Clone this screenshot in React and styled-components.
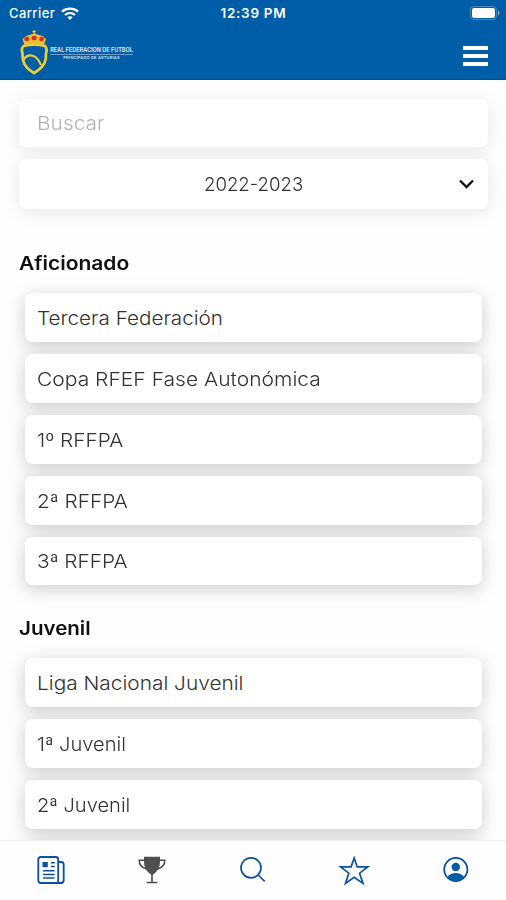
import React from 'react';
import styled, {createGlobalStyle} from 'styled-components';

const BLUE = '#005da8';

const GlobalStyle = createGlobalStyle`
  * {
    box-sizing: border-box;
  }
  body {
    margin: 0;
    background: #fefefe;
    font-family: Inter, "Open Sans", sans-serif;
  }
`;

const Screen = styled.div`
  height: 900px;
  display: flex;
  flex-direction: column;
  overflow: hidden;
`;

const Header = styled.header`
  flex: none;
  height: 80px;
  background: ${BLUE};
  border-bottom: 1px solid #0b469b;
  color: white;
`;

const StatusBar = styled.div`
  height: 26px;
  padding: 0 6px 0 9px;
  display: grid;
  grid-template-columns: 1fr auto 1fr;
  align-items: center;
  font-size: 13px;
  line-height: 26px;
`;

const Carrier = styled.div`
  display: flex;
  align-items: center;
  gap: 6px;
  font-weight: 500;
  letter-spacing: 0.42px;
`;

const Clock = styled.div`
  font-weight: 600;
  font-size: 13.5px;
  letter-spacing: 0.7px;
  margin-right: 2px;
`;

const Battery = styled.svg`
  justify-self: end;
`;

const TitleBar = styled.div`
  height: 53px;
  padding: 3px 18px 0 20px;
  display: flex;
  justify-content: space-between;
`;

const Brand = styled.div`
  display: flex;
`;

const BrandText = styled.div`
  padding-top: 18px;
  width: 83px;
  margin-left: 1px;
  text-align: center;
  white-space: nowrap;
  color: #d5e2ef;
`;

const BrandName = styled.div`
  font-size: 5.5px;
  line-height: 7px;
  font-weight: 700;
  border-bottom: 1px solid #6f9dc8;
`;

const BrandRegion = styled.div`
  font-size: 4px;
  line-height: 5px;
  font-weight: 600;
  letter-spacing: 0.2px;
`;

const MenuButton = styled.div`
  margin-top: 17px;
  width: 25px;
  height: 20px;
  display: flex;
  flex-direction: column;
  justify-content: space-between;
  span {
    height: 4px;
    background: white;
  }
`;

const Content = styled.main`
  flex: 1;
  min-height: 0;
  overflow: hidden;
  padding: 19px 18px 0 19px;
`;

// the shadow is cast by the whole stack, so cards never shade each other
const Filters = styled.div`
  display: flex;
  flex-direction: column;
  gap: 12px;
  filter: drop-shadow(0 3px 9px rgba(0, 0, 0, 0.09));
`;

const Field = styled.div`
  height: ${({select}) => (select ? 50 : 48)}px;
  padding: 0 12px 0 18px;
  display: grid;
  grid-template-columns: ${({select}) => (select ? '14px 1fr 18px' : '1fr')};
  align-items: center;
  border-radius: 8px;
  background: white;
  font-size: 19px;
  font-weight: 300;
  color: ${({muted}) => (muted ? '#b4b4b4' : '#333')};
  text-align: ${({select}) => (select ? 'center' : 'left')};
`;

const FieldValue = styled.span`
  grid-column: 2;
`;

const Wide = styled.span`
  display: inline-block;
  transform: scaleX(${({stretch}) => stretch || 1.1});
  transform-origin: left center;
`;

const Category = styled.section`
  padding-top: ${({first}) => (first ? 40.4 : 29)}px;
`;

const CategoryTitle = styled.h2`
  margin: 0 0 16px;
  font-size: 18.5px;
  line-height: 28px;
  font-weight: 600;
  color: #111;
`;

const List = styled.div`
  display: flex;
  flex-direction: column;
  gap: 12px;
  padding: 0 6px;
  filter: drop-shadow(0 4px 9px rgba(0, 0, 0, 0.2));
`;

const Row = styled.div`
  height: 48.8px;
  padding: 2px 0 0 12px;
  display: flex;
  align-items: center;
  border-radius: 8px;
  background: white;
  font-size: 18.8px;
  font-weight: 300;
  white-space: nowrap;
  color: #333;
`;

const TabBar = styled.nav`
  flex: none;
  height: 60px;
  display: grid;
  grid-template-columns: repeat(5, 1fr);
  background: #fefefe;
  border-top: 1px solid #ededed;
  position: relative;
  z-index: 1;
`;

const Tab = styled.div`
  display: flex;
  justify-content: center;
  padding-top: 15px;
  color: ${({active}) => (active ? '#505050' : '#0b50a2')};
`;

const categories = [
  {
    name: 'Aficionado',
    stretch: 1.135,
    items: [
      ['Tercera Federación', 1.1],
      ['Copa RFEF Fase Autonómica', 1.12],
      ['1º RFFPA', 1.11],
      ['2ª RFFPA', 1.11],
      ['3ª RFFPA', 1.11],
    ],
  },
  {
    name: 'Juvenil',
    stretch: 1.11,
    items: [
      ['Liga Nacional Juvenil', 1.11],
      ['1ª Juvenil', 1.07],
      ['2ª Juvenil', 1.07],
      ['', 1],
    ],
  },
];

const WifiIcon = () => (
  <svg width="18" height="13" viewBox="0 0 18 13" fill="none" stroke="white" strokeWidth="2.3">
    <path d="M1 4.6C5.4.6 12.6.6 17 4.6" />
    <path d="M4 8c2.9-2.5 7.1-2.5 10 0" />
    <path d="M6.4 10.2c1.5-1.2 3.7-1.2 5.2 0L9 12.9z" fill="white" stroke="none" />
  </svg>
);

const Crest = () => (
  <svg width="29" height="46" viewBox="0 0 29 46">
    <g fill="none" stroke="#f2cd2e" strokeWidth="2.7" strokeLinejoin="round">
      <path d="M3.5 17C1.8 19 1.5 21 2.2 23c.7 3 .2 5 .8 8C4 36 8 40.5 14 44c6-3.5 10.500-8 11.500-13 .6-3 .1-5 .8-8 .6-2 .4-4-1.300-6-7-1.800-14.500-1.800-21.500 0z" />
      <path d="M3 31c4-5.500 9-6 13-2.500 2.500 2.200 4 4.500 5 7.500" strokeWidth="2.200" />
    </g>
    <path d="M4.500 16L2.500 10 6 7l8-2.500L22.500 7l3.500 3-2 6c-6.500-1.500-13-1.500-19.500 0z" fill="#eabf37" />
    <path d="M14.200 1v5M12.400 2.600H16" stroke="#eabf37" strokeWidth="1.400" />
    <g fill="#dd2b1c">
      <ellipse cx="6.800" cy="10" rx="2.500" ry="2.300" />
      <ellipse cx="14.200" cy="9" rx="2.600" ry="2.300" />
      <ellipse cx="21.600" cy="10" rx="2.500" ry="2.300" />
    </g>
  </svg>
);

const NewsIcon = () => (
  <svg width="28" height="28" viewBox="0 0 28 28" fill="none" stroke="currentColor" strokeWidth="1.8">
    <path d="M21 27H4c-1.800 0-2.700-1-2.700-2.700V3.500C1.300 2 2.200 1 3.700 1h15c1.500 0 2.500 1 2.500 2.500V27M21.200 6h3c1.500 0 2.500 1 2.500 2.500v15.800c0 1.700-1 2.700-2.700 2.700h-3" />
    <path d="M5.500 6h5.300v5.200H5.500z" fill="currentColor" stroke="none" />
    <path d="M14 6.700h3.800M14 10.600h3.800M6 14.800h11.500M6 18.500h11.500M6 22.100h11.500" strokeWidth="1.5" />
  </svg>
);

const TrophyIcon = () => (
  <svg width="28" height="28" viewBox="0 0 28 28" fill="none" stroke="currentColor">
    <path d="M6 .8h16c.2 5.700.1 10-2.300 13.200-1.300 1.900-2.900 3.500-4.600 4.400h-2.200C11.200 17.500 9.600 15.900 8.300 14 5.900 10.800 5.800 6.500 6 .8z" fill="currentColor" stroke="none" />
    <path d="M7 4.300H1.200c0 4.500 2 7.400 7.300 8.700M21 4.300h5.800c0 4.500-2 7.400-7.300 8.700" strokeWidth="1.6" />
    <path d="M14 17v9" strokeWidth="1.7" />
    <path d="M8.500 26.500h11" strokeWidth="1.5" />
  </svg>
);

const SearchIcon = () => (
  <svg width="28" height="28" viewBox="0 0 28 28" fill="none" stroke="currentColor" strokeWidth="1.7">
    <circle cx="12" cy="11.800" r="10" />
    <path d="M19.200 19l6.500 6.300" />
  </svg>
);

const StarIcon = () => (
  <svg width="32" height="30" viewBox="0 0 32 30" fill="none" stroke="currentColor" strokeWidth="1.7">
    <path d="M16.200 2l3 8.900h10.500l-8.100 6.300 3.400 10.200-8.800-6-8.700 6 3.300-10.200-8.200-6.300h10.500z" />
  </svg>
);

const ProfileIcon = () => (
  <svg width="28" height="28" viewBox="0 0 28 28">
    <circle cx="14.800" cy="13.500" r="11.600" fill="none" stroke="currentColor" strokeWidth="1.800" />
    <circle cx="14.800" cy="11" r="4.200" fill={BLUE} />
    <path d="M6.500 21c3.500-5.300 13.100-5.300 16.600 0-3.500 5.300-13.100 5.300-16.600 0z" fill={BLUE} />
  </svg>
);

const App = () => (
  <Screen>
    <GlobalStyle />
    <Header>
      <StatusBar>
        <Carrier>Carrier <WifiIcon /></Carrier>
        <Clock>12:39 PM</Clock>
        <Battery width="30" height="14" viewBox="0 0 30 14">
          <rect x=".5" y=".5" width="26" height="13" rx="3.5" fill="none" stroke="#4a88bf" />
          <rect x="2" y="2" width="23" height="10" rx="2" fill="white" />
          <path d="M28 4.500c2 .8 2 4.200 0 5z" fill="#7aa9d0" />
        </Battery>
      </StatusBar>
      <TitleBar>
        <Brand>
          <Crest />
          <BrandText>
            <BrandName>REAL FEDERACION DE FUTBOL</BrandName>
            <BrandRegion>PRINCIPADO DE ASTURIAS</BrandRegion>
          </BrandText>
        </Brand>
        <MenuButton><span /><span /><span /></MenuButton>
      </TitleBar>
    </Header>
    <Content>
      <Filters>
        <Field muted><span><Wide>Buscar</Wide></span></Field>
        <Field select>
          <FieldValue><Wide stretch={0.98}>2022-2023</Wide></FieldValue>
          <svg width="17" height="12" viewBox="0 0 17 12" fill="none" stroke="#111" strokeWidth="2.3">
            <path d="M2 2.500l6.500 6.500L15 2.500" />
          </svg>
        </Field>
      </Filters>
      {categories.map((category, i) => (
        <Category key={category.name} first={i === 0}>
          <CategoryTitle>
            <Wide stretch={category.stretch}>{category.name}</Wide>
          </CategoryTitle>
          <List>
            {category.items.map(([label, stretch], n) => (
              <Row key={n}>{label && <Wide stretch={stretch}>{label}</Wide>}</Row>
            ))}
          </List>
        </Category>
      ))}
    </Content>
    <TabBar>
      <Tab><NewsIcon /></Tab>
      <Tab active><TrophyIcon /></Tab>
      <Tab><SearchIcon /></Tab>
      <Tab><StarIcon /></Tab>
      <Tab><ProfileIcon /></Tab>
    </TabBar>
  </Screen>
);

export default App;
